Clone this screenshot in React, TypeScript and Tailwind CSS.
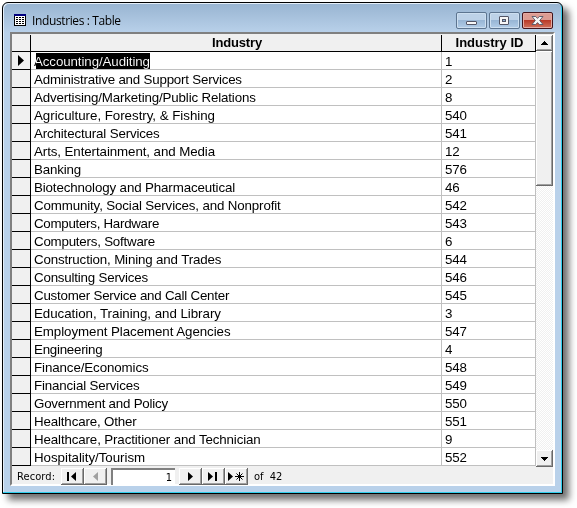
import React from "react";

type Row = { name: string; id: number; tracking: string };

const rows: Row[] = [
  { name: "Accounting/Auditing", id: 1, tracking: "tracking-[-0.1px]" },
  { name: "Administrative and Support Services", id: 2, tracking: "tracking-[-0.2px]" },
  { name: "Advertising/Marketing/Public Relations", id: 8, tracking: "tracking-[-0.15px]" },
  { name: "Agriculture, Forestry, & Fishing", id: 540, tracking: "tracking-[-0.03px]" },
  { name: "Architectural Services", id: 541, tracking: "tracking-[-0.15px]" },
  { name: "Arts, Entertainment, and Media", id: 12, tracking: "tracking-[-0.09px]" },
  { name: "Banking", id: 576, tracking: "tracking-[-0.17px]" },
  { name: "Biotechnology and Pharmaceutical", id: 46, tracking: "tracking-[-0.13px]" },
  { name: "Community, Social Services, and Nonprofit", id: 542, tracking: "tracking-[-0.14px]" },
  { name: "Computers, Hardware", id: 543, tracking: "tracking-[-0.28px]" },
  { name: "Computers, Software", id: 6, tracking: "tracking-[-0.22px]" },
  { name: "Construction, Mining and Trades", id: 544, tracking: "tracking-[-0.15px]" },
  { name: "Consulting Services", id: 546, tracking: "tracking-[-0.2px]" },
  { name: "Customer Service and Call Center", id: 545, tracking: "tracking-[-0.22px]" },
  { name: "Education, Training, and Library", id: 3, tracking: "tracking-[-0.04px]" },
  { name: "Employment Placement Agencies", id: 547, tracking: "tracking-[-0.07px]" },
  { name: "Engineering", id: 4, tracking: "tracking-[-0.25px]" },
  { name: "Finance/Economics", id: 548, tracking: "tracking-[-0.1px]" },
  { name: "Financial Services", id: 549, tracking: "tracking-[-0.15px]" },
  { name: "Government and Policy", id: 550, tracking: "tracking-[-0.22px]" },
  { name: "Healthcare, Other", id: 551, tracking: "tracking-[-0.15px]" },
  { name: "Healthcare, Practitioner and Technician", id: 9, tracking: "tracking-[-0.13px]" },
  { name: "Hospitality/Tourism", id: 552, tracking: "tracking-[-0.04px]" },
];

const raised =
  "shrink-0 bg-[#f0f0f0] shadow-[inset_-1px_-1px_#696969,inset_1px_1px_#ffffff,inset_-2px_-2px_#a0a0a0]";

function TableIcon() {
  return (
    <svg width="12" height="12" viewBox="0 0 12 12" shapeRendering="crispEdges">
      <path d="M0 0h12v12H0z" fill="#000" />
      <path d="M0 0h12v2H0z" fill="#000080" />
      <path d="M1 2h10v9H1z" fill="#fff" />
      <path
        d="M2 3h2v1H2zM5 3h2v1H5zM8 3h2v1H8zM2 5h2v1H2zM5 5h2v1H5zM8 5h2v1H8zM2 7h2v1H2zM5 7h2v1H5zM8 7h2v1H8zM2 9h2v1H2zM5 9h2v1H5zM8 9h2v1H8z"
        fill="#000"
      />
    </svg>
  );
}

function Caption({ kind }: { kind: "min" | "max" | "close" }) {
  const close = kind === "close";
  return (
    <div
      className={
        close
          ? "flex h-[17px] w-[31px] items-center justify-center rounded-[2px] border border-[#43141c] bg-linear-to-b from-[#dd9c93] from-45% via-[#b93a28] via-50% to-[#d0705c] shadow-[inset_0_0_0_1px_#e5aaa2]"
          : "flex h-[17px] w-[31px] items-center justify-center rounded-[2px] border border-[#5d7590] bg-linear-to-b from-[#bdd2e8] from-45% via-[#98b6d5] via-50% to-[#b2cde8] shadow-[inset_0_0_0_1px_#cddff0]"
      }
    >
      {kind === "min" && (
        <svg width="11" height="11" viewBox="0 0 11 11">
          <rect x=".5" y="6.5" width="10" height="3" rx=".5" fill="#f7f7f7" stroke="#535666" />
        </svg>
      )}
      {kind === "max" && (
        <svg width="11" height="11" viewBox="0 0 11 11">
          <rect x=".5" y="1.5" width="9" height="8" rx=".5" fill="#f7f7f7" stroke="#535666" />
          <rect x="3.5" y="4.5" width="3" height="2" fill="#94b4d5" stroke="#535666" />
        </svg>
      )}
      {close && (
        <svg width="13" height="11" viewBox="-.5 0 13 11">
          <path
            d="M.5 1.5h3.7L6 3.4l1.8-1.9h3.7L8.2 5.5l3.3 4H7.8L6 7.6 4.2 9.5H.5L3.8 5.5z"
            fill="#f7f7f7"
            stroke="#535666"
            strokeWidth=".9"
          />
        </svg>
      )}
    </div>
  );
}

function NavButton({ children }: { children: React.ReactNode }) {
  return (
    <div className={`${raised} flex h-[17px] w-[23px] items-center justify-center pr-px`}>{children}</div>
  );
}

export default function App() {
  return (
    <div className="h-[508px] w-[577px] overflow-hidden bg-white pl-[2px] pt-[2px] font-['Liberation_Sans',Arial,sans-serif] text-black">
      <div className="flex h-[492px] w-[561px] flex-col rounded-t-[6px] border border-black bg-[#b9d1ea] bg-linear-to-b from-[#98b4d1] to-[#b9d1ea] to-[30px] px-[7px] shadow-[inset_-1px_-1px_#2fd0ee,inset_1px_1px_#e4eef8,6px_6px_7px_#00000090]">
        <div className="flex h-[29px] shrink-0 items-start">
          <div className="ml-[4px] mt-[11px]">
            <TableIcon />
          </div>
          <div className="ml-[6px] mt-[10px] whitespace-nowrap font-['Open_Sans','Noto_Sans',sans-serif] text-[12px] leading-[16px] tracking-[-0.38px] text-black">
            Industries : Table
          </div>
          <div className="ml-auto mr-[2px] mt-[9px] flex gap-[2px]">
            <Caption kind="min" />
            <Caption kind="max" />
            <Caption kind="close" />
          </div>
        </div>

        <div className="flex h-[454px] w-[545px] shrink-0 flex-col border-2 border-b-white border-l-[#808080] border-r-white border-t-[#808080] bg-[#f0f0f0] pt-px">
          <div className="flex h-[431px] shrink-0">
            <div className="w-[524px] shrink-0">
              <div className="flex h-[17px] border-b border-black bg-[#f0f0f0] text-[13px] font-bold leading-[16px]">
                <div className="w-[19px] border-r border-black" />
                <div className="w-[411px] border-r border-black pl-[2px] text-center tracking-[-0.15px]">
                  Industry
                </div>
                <div className="w-[94px] border-r border-black pl-[2px] text-center">Industry ID</div>
              </div>
              {rows.map((row, i) => (
                <div key={row.id} className="flex h-[18px] bg-white text-[13.33px] leading-[19px]">
                  <div className="flex w-[19px] items-center justify-center border-b border-r border-black bg-[#f0f0f0]">
                    {i === 0 && (
                      <svg width="6" height="11" viewBox="0 0 6 11">
                        <path d="M0 0l6 5.5L0 11z" />
                      </svg>
                    )}
                  </div>
                  <div className="h-[18px] w-[411px] whitespace-nowrap border-b border-r border-[#c0c0c0] pl-[3px]">
                    <div className={`relative h-[17px] w-fit ${row.tracking}`}>
                      {row.name}
                      {i === 0 && (
                        <div className="absolute bottom-0 left-[2px] right-0 top-px bg-white mix-blend-difference" />
                      )}
                    </div>
                  </div>
                  <div className="w-[94px] border-b border-r border-[#c0c0c0] pl-[3px] tracking-[-0.15px]">
                    {row.id}
                  </div>
                </div>
              ))}
            </div>
            <div className="-mb-px flex w-[17px] shrink-0 flex-col bg-[repeating-conic-gradient(#ffffff_0_25%,#f0f0f0_0_50%)] bg-size-[2px_2px]">
              <div className={`${raised} flex h-[16px] items-center justify-center`}>
                <svg width="7" height="4" viewBox="0 0 7 4" shapeRendering="crispEdges">
                  <path d="M3 0h1v1H3zM2 1h3v1H2zM1 2h5v1H1zM0 3h7v1H0z" />
                </svg>
              </div>
              <div className={`${raised} h-[135px]`} />
              <div className={`${raised} mt-auto flex h-[17px] items-center justify-center`}>
                <svg width="7" height="4" viewBox="0 0 7 4" shapeRendering="crispEdges">
                  <path d="M0 0h7v1H0zM1 1h5v1H1zM2 2h3v1H2zM3 3h1v1H3z" />
                </svg>
              </div>
            </div>
          </div>

          <div className="flex h-[19px] shrink-0 items-center pt-px font-['DejaVu_Sans_Condensed','DejaVu_Sans',sans-serif] text-[11px] leading-[16px]">
            <span className="w-[49px] pl-[5px] pt-[2px] tracking-[0.1px]">Record:</span>
            <NavButton>
              <svg width="10" height="9" viewBox="0 0 10 9">
                <path d="M0 0h2v9H0zM9 0v9L4 4.5z" />
              </svg>
            </NavButton>
            <NavButton>
              <svg width="5" height="9" viewBox="0 0 5 9">
                <path d="M5 0v9L0 4.5z" fill="#a0a0a0" />
              </svg>
            </NavButton>
            <div className="ml-[4px] mr-[4px] h-[17px] w-[64px] border-l-2 border-t-2 border-[#808080] bg-white pr-[3px] text-right leading-[16px]">
              1
            </div>
            <NavButton>
              <svg width="5" height="9" viewBox="0 0 5 9">
                <path d="M0 0v9l5-4.5z" />
              </svg>
            </NavButton>
            <NavButton>
              <svg width="10" height="9" viewBox="0 0 10 9">
                <path d="M0 0v9l5-4.5zM7 0h2v9H7z" />
              </svg>
            </NavButton>
            <NavButton>
              <svg width="17" height="9" viewBox="0 0 17 9">
                <path d="M0 0v9l5-4.5z" />
                <path d="M11.5 0v9M7 4.5h9M8.5 1.5l6 6M14.5 1.5l-6 6" stroke="#000" />
              </svg>
            </NavButton>
            <span className="pl-[6px] pt-[2px]">of&nbsp; 42</span>
          </div>
        </div>
      </div>
    </div>
  );
}
